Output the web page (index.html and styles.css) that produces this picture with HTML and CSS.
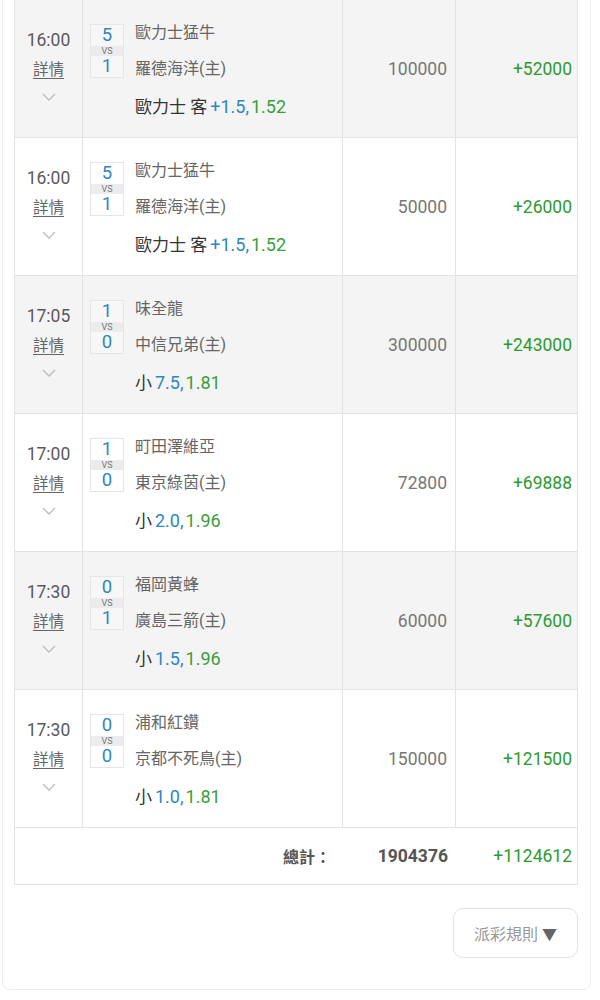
FILE: index.html
```html
<!DOCTYPE html>
<html lang="zh-Hant">
<head>
<meta charset="utf-8">
<link rel="stylesheet" href="styles.css">
</head>
<body>
<div class="card">
  <div class="table">
    <div class="row gray">
      <div class="c time"><span class="t">16:00</span><a class="det">詳情</a><span class="chev"><svg width="14" height="8" viewBox="0 0 14 8"><path d="M1 1l6 6 6-6" fill="none" stroke="#bbb" stroke-width="1.3"/></svg></span></div>
      <div class="c match">
        <div class="score"><span class="n">5</span><span class="vs">VS</span><span class="n">1</span></div>
        <div class="info"><div class="tm">歐力士猛牛</div><div class="tm">羅德海洋(主)</div><div class="bet">歐力士 客<span class="b">+1.5,</span><span class="g">1.52</span></div></div>
      </div>
      <div class="c amt">100000</div>
      <div class="c win">+52000</div>
    </div>
    <div class="row">
      <div class="c time"><span class="t">16:00</span><a class="det">詳情</a><span class="chev"><svg width="14" height="8" viewBox="0 0 14 8"><path d="M1 1l6 6 6-6" fill="none" stroke="#bbb" stroke-width="1.3"/></svg></span></div>
      <div class="c match">
        <div class="score"><span class="n">5</span><span class="vs">VS</span><span class="n">1</span></div>
        <div class="info"><div class="tm">歐力士猛牛</div><div class="tm">羅德海洋(主)</div><div class="bet">歐力士 客<span class="b">+1.5,</span><span class="g">1.52</span></div></div>
      </div>
      <div class="c amt">50000</div>
      <div class="c win">+26000</div>
    </div>
    <div class="row gray">
      <div class="c time"><span class="t">17:05</span><a class="det">詳情</a><span class="chev"><svg width="14" height="8" viewBox="0 0 14 8"><path d="M1 1l6 6 6-6" fill="none" stroke="#bbb" stroke-width="1.3"/></svg></span></div>
      <div class="c match">
        <div class="score"><span class="n">1</span><span class="vs">VS</span><span class="n">0</span></div>
        <div class="info"><div class="tm">味全龍</div><div class="tm">中信兄弟(主)</div><div class="bet">小<span class="b">7.5,</span><span class="g">1.81</span></div></div>
      </div>
      <div class="c amt">300000</div>
      <div class="c win">+243000</div>
    </div>
    <div class="row">
      <div class="c time"><span class="t">17:00</span><a class="det">詳情</a><span class="chev"><svg width="14" height="8" viewBox="0 0 14 8"><path d="M1 1l6 6 6-6" fill="none" stroke="#bbb" stroke-width="1.3"/></svg></span></div>
      <div class="c match">
        <div class="score"><span class="n">1</span><span class="vs">VS</span><span class="n">0</span></div>
        <div class="info"><div class="tm">町田澤維亞</div><div class="tm">東京綠茵(主)</div><div class="bet">小<span class="b">2.0,</span><span class="g">1.96</span></div></div>
      </div>
      <div class="c amt">72800</div>
      <div class="c win">+69888</div>
    </div>
    <div class="row gray">
      <div class="c time"><span class="t">17:30</span><a class="det">詳情</a><span class="chev"><svg width="14" height="8" viewBox="0 0 14 8"><path d="M1 1l6 6 6-6" fill="none" stroke="#bbb" stroke-width="1.3"/></svg></span></div>
      <div class="c match">
        <div class="score"><span class="n">0</span><span class="vs">VS</span><span class="n">1</span></div>
        <div class="info"><div class="tm">福岡黃蜂</div><div class="tm">廣島三箭(主)</div><div class="bet">小<span class="b">1.5,</span><span class="g">1.96</span></div></div>
      </div>
      <div class="c amt">60000</div>
      <div class="c win">+57600</div>
    </div>
    <div class="row">
      <div class="c time"><span class="t">17:30</span><a class="det">詳情</a><span class="chev"><svg width="14" height="8" viewBox="0 0 14 8"><path d="M1 1l6 6 6-6" fill="none" stroke="#bbb" stroke-width="1.3"/></svg></span></div>
      <div class="c match">
        <div class="score"><span class="n">0</span><span class="vs">VS</span><span class="n">0</span></div>
        <div class="info"><div class="tm">浦和紅鑽</div><div class="tm">京都不死鳥(主)</div><div class="bet">小<span class="b">1.0,</span><span class="g">1.81</span></div></div>
      </div>
      <div class="c amt">150000</div>
      <div class="c win">+121500</div>
    </div>
    <div class="total">
      <div class="tl">總計：</div>
      <div class="tamt">1904376</div>
      <div class="twin">+1124612</div>
    </div>
  </div>
  <div class="foot">
    <button class="rules">派彩規則 <span class="tri">▼</span></button>
  </div>
</div>
</body>
</html>
```
FILE: styles.css
```css
html, body {
  margin: 0;
  padding: 0;
  background: #fff;
}
body {
  font-family: Roboto, "Noto Sans CJK TC", sans-serif;
  color: #666;
}
.card {
  margin-left: 2px;
  width: 589px;
  height: 990px;
  box-sizing: border-box;
  border: 1px solid #ececec;
  border-top: none;
  border-radius: 0 0 8px 8px;
  padding: 0 12px 0 11px;
  background: #fff;
}
.table {
  border-left: 1px solid #e3e3e3;
  border-right: 1px solid #e3e3e3;
  border-bottom: 1px solid #e3e3e3;
}
.row {
  display: grid;
  grid-template-columns: 68px 260px 113px 123px;
  height: 138px;
  box-sizing: border-box;
  border-bottom: 1px solid #e3e3e3;
  background: #fff;
}
.row.gray {
  background: #f4f4f4;
}
.c {
  border-right: 1px solid #e3e3e3;
  box-sizing: border-box;
}
.c:last-child {
  border-right: none;
}
.time {
  display: flex;
  flex-direction: column;
  align-items: center;
  padding-top: 28px;
}
.t {
  font-size: 17.5px;
  line-height: 24px;
  color: #5a5a5a;
}
.det {
  font-size: 15.5px;
  line-height: 22px;
  margin-top: 7px;
  color: #666;
  text-decoration: underline;
  text-underline-offset: 3px;
}
.chev {
  margin-top: 12px;
  line-height: 0;
}
.match {
  display: flex;
  padding: 15px 0 0 7px;
}
.score {
  width: 34px;
  height: 54px;
  margin-top: 9px;
  box-sizing: border-box;
  border: 1px solid #e6e6e6;
  display: flex;
  flex-direction: column;
  align-items: center;
  background: #fff;
}
.gray .score { background: #f7f7f7; }
.score .n {
  color: #2f86c0;
  font-size: 18.5px;
  line-height: 21px;
  height: 21px;
}
.score .vs {
  width: 100%;
  text-align: center;
  font-size: 9px;
  line-height: 10px;
  height: 10px;
  color: #777;
  background: #ececec;
}
.info {
  margin-left: 11px;
}
.tm {
  font-size: 16px;
  line-height: 36px;
  color: #666;
}
.bet {
  font-size: 17px;
  line-height: 36px;
  margin-top: 2px;
  color: #333;
}
.bet .b {
  color: #2f86c0;
  margin-left: 3px;
  margin-right: 2px;
  font-size: 18px;
}
.bet .g {
  color: #3a9e3a;
  font-size: 18px;
}
.amt, .win {
  display: flex;
  align-items: center;
  justify-content: flex-end;
  padding-right: 8px;
  font-size: 17.5px;
}
.amt { color: #777; }
.win { color: #2e9a2e; padding-right: 7px; }
.total {
  display: grid;
  grid-template-columns: 328px 113px 123px;
  height: 56px;
  align-items: center;
  font-size: 16px;
  font-weight: bold;
  color: #555;
}
.tl {
  text-align: right;
  padding-right: 12px;
}
.tamt {
  text-align: right;
  padding-right: 8px;
  font-size: 17.5px;
}
.twin {
  text-align: right;
  padding-right: 7px;
  color: #2e9a2e;
  font-weight: normal;
  font-size: 17.5px;
}
.foot {
  display: flex;
  justify-content: flex-end;
  padding-top: 23px;
}
.rules {
  width: 125px;
  height: 50px;
  border: 1px solid #e2e2e2;
  border-radius: 10px;
  background: #fff;
  font-family: Roboto, "Noto Sans CJK TC", sans-serif;
  font-size: 16px;
  color: #999;
  padding: 0;
}
.rules .tri {
  color: #666;
  font-size: 15px;
}
```
